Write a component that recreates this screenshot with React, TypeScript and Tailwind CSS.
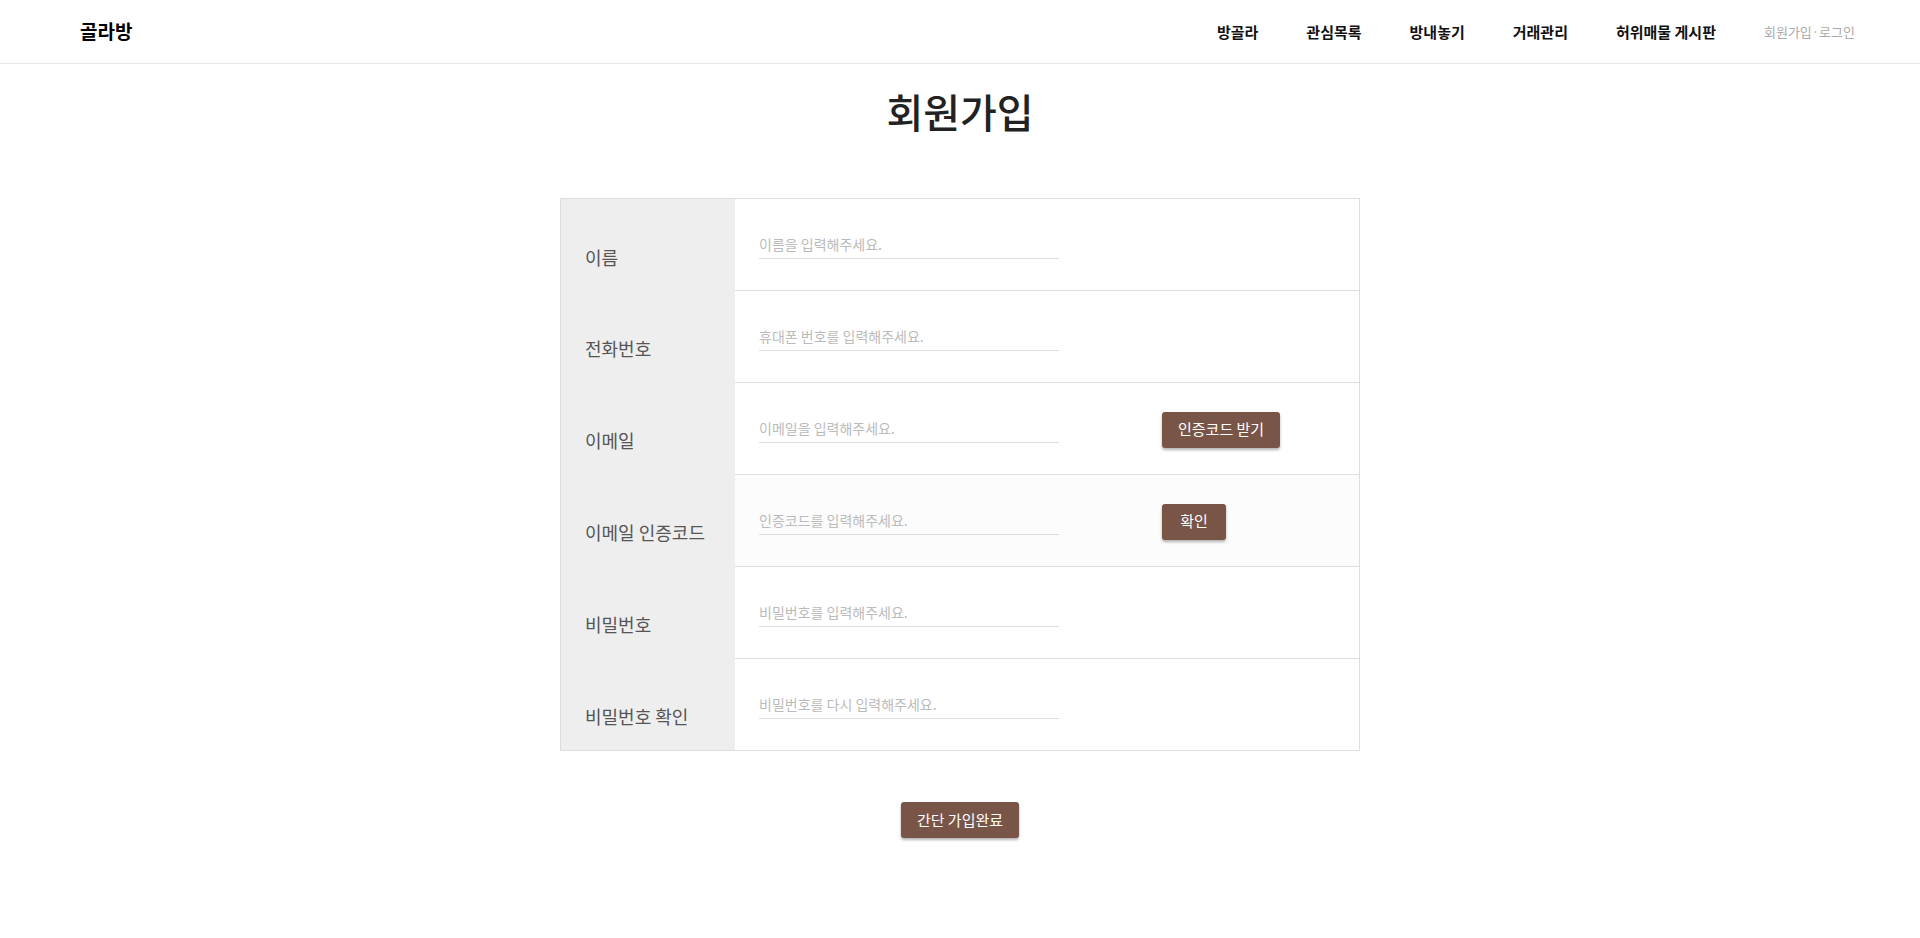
import React from "react";

const rows: { label: string; placeholder: string; button?: string; bg?: string; type?: string }[] = [
  { label: "이름", placeholder: "이름을 입력해주세요." },
  { label: "전화번호", placeholder: "휴대폰 번호를 입력해주세요." },
  { label: "이메일", placeholder: "이메일을 입력해주세요.", button: "인증코드 받기" },
  { label: "이메일 인증코드", placeholder: "인증코드를 입력해주세요.", button: "확인", bg: "hover" },
  { label: "비밀번호", placeholder: "비밀번호를 입력해주세요.", type: "password" },
  { label: "비밀번호 확인", placeholder: "비밀번호를 다시 입력해주세요.", type: "password" },
];

const navItems = ["방골라", "관심목록", "방내놓기", "거래관리", "허위매물 게시판"];

export default function App() {
  return (
    <div
      className="min-h-[938px] bg-white text-[#222]"
      style={{ fontFamily: '"Noto Sans CJK KR", "Noto Sans", sans-serif' }}
    >
      <header className="h-[64px] border-b border-[#e8e8e8] flex items-center justify-between pl-[80px] pr-[65px]">
        <div className="text-[19px] font-bold text-black">골라방</div>
        <nav className="flex items-center gap-[48px]">
          {navItems.map((n) => (
            <a key={n} className="text-[15px] font-bold text-[#111] leading-none">
              {n}
            </a>
          ))}
          <a className="text-[13px] text-[#aaa] leading-none">회원가입·로그인</a>
        </nav>
      </header>

      <main className="flex flex-col items-center">
        <h1 className="mt-[20px] text-[40px] leading-[54px] font-medium text-[#222]">회원가입</h1>

        <div className="mt-[60px] w-[800px] border border-[#ddd] flex flex-col">
          {rows.map((r, i) => (
            <div key={r.label} className="flex">
              <div className="w-[174px] bg-[#eee] flex items-center pl-6 pt-[25px] text-[18px] text-[#555]">
                {r.label}
              </div>
              <div
                className={
                  "flex-1 flex items-center pl-6 " +
                  (i === 0 ? "h-[91px] " : "h-[92px] border-t border-[#ddd] ") +
                  (r.bg ? "bg-[#fcfcfc]" : "bg-white")
                }
              >
                <input
                  type={r.type ?? "text"}
                  placeholder={r.placeholder}
                  className="w-[300px] h-[28px] border-b border-[#ddd] bg-transparent outline-none text-[14px] text-[#333] placeholder:text-[#bbb]"
                />
                {r.button && (
                  <button className="ml-[103px] mt-[2px] h-[36px] min-w-[64px] px-4 rounded-[3px] bg-[#795548] text-white text-[15px] shadow-[0_2px_3px_rgba(0,0,0,0.3)]">
                    {r.button}
                  </button>
                )}
              </div>
            </div>
          ))}
        </div>

        <button className="mt-[51px] h-[36px] min-w-[64px] px-4 rounded-[3px] bg-[#795548] text-white text-[15px] shadow-[0_2px_3px_rgba(0,0,0,0.3)]">
          간단 가입완료
        </button>
      </main>
    </div>
  );
}
